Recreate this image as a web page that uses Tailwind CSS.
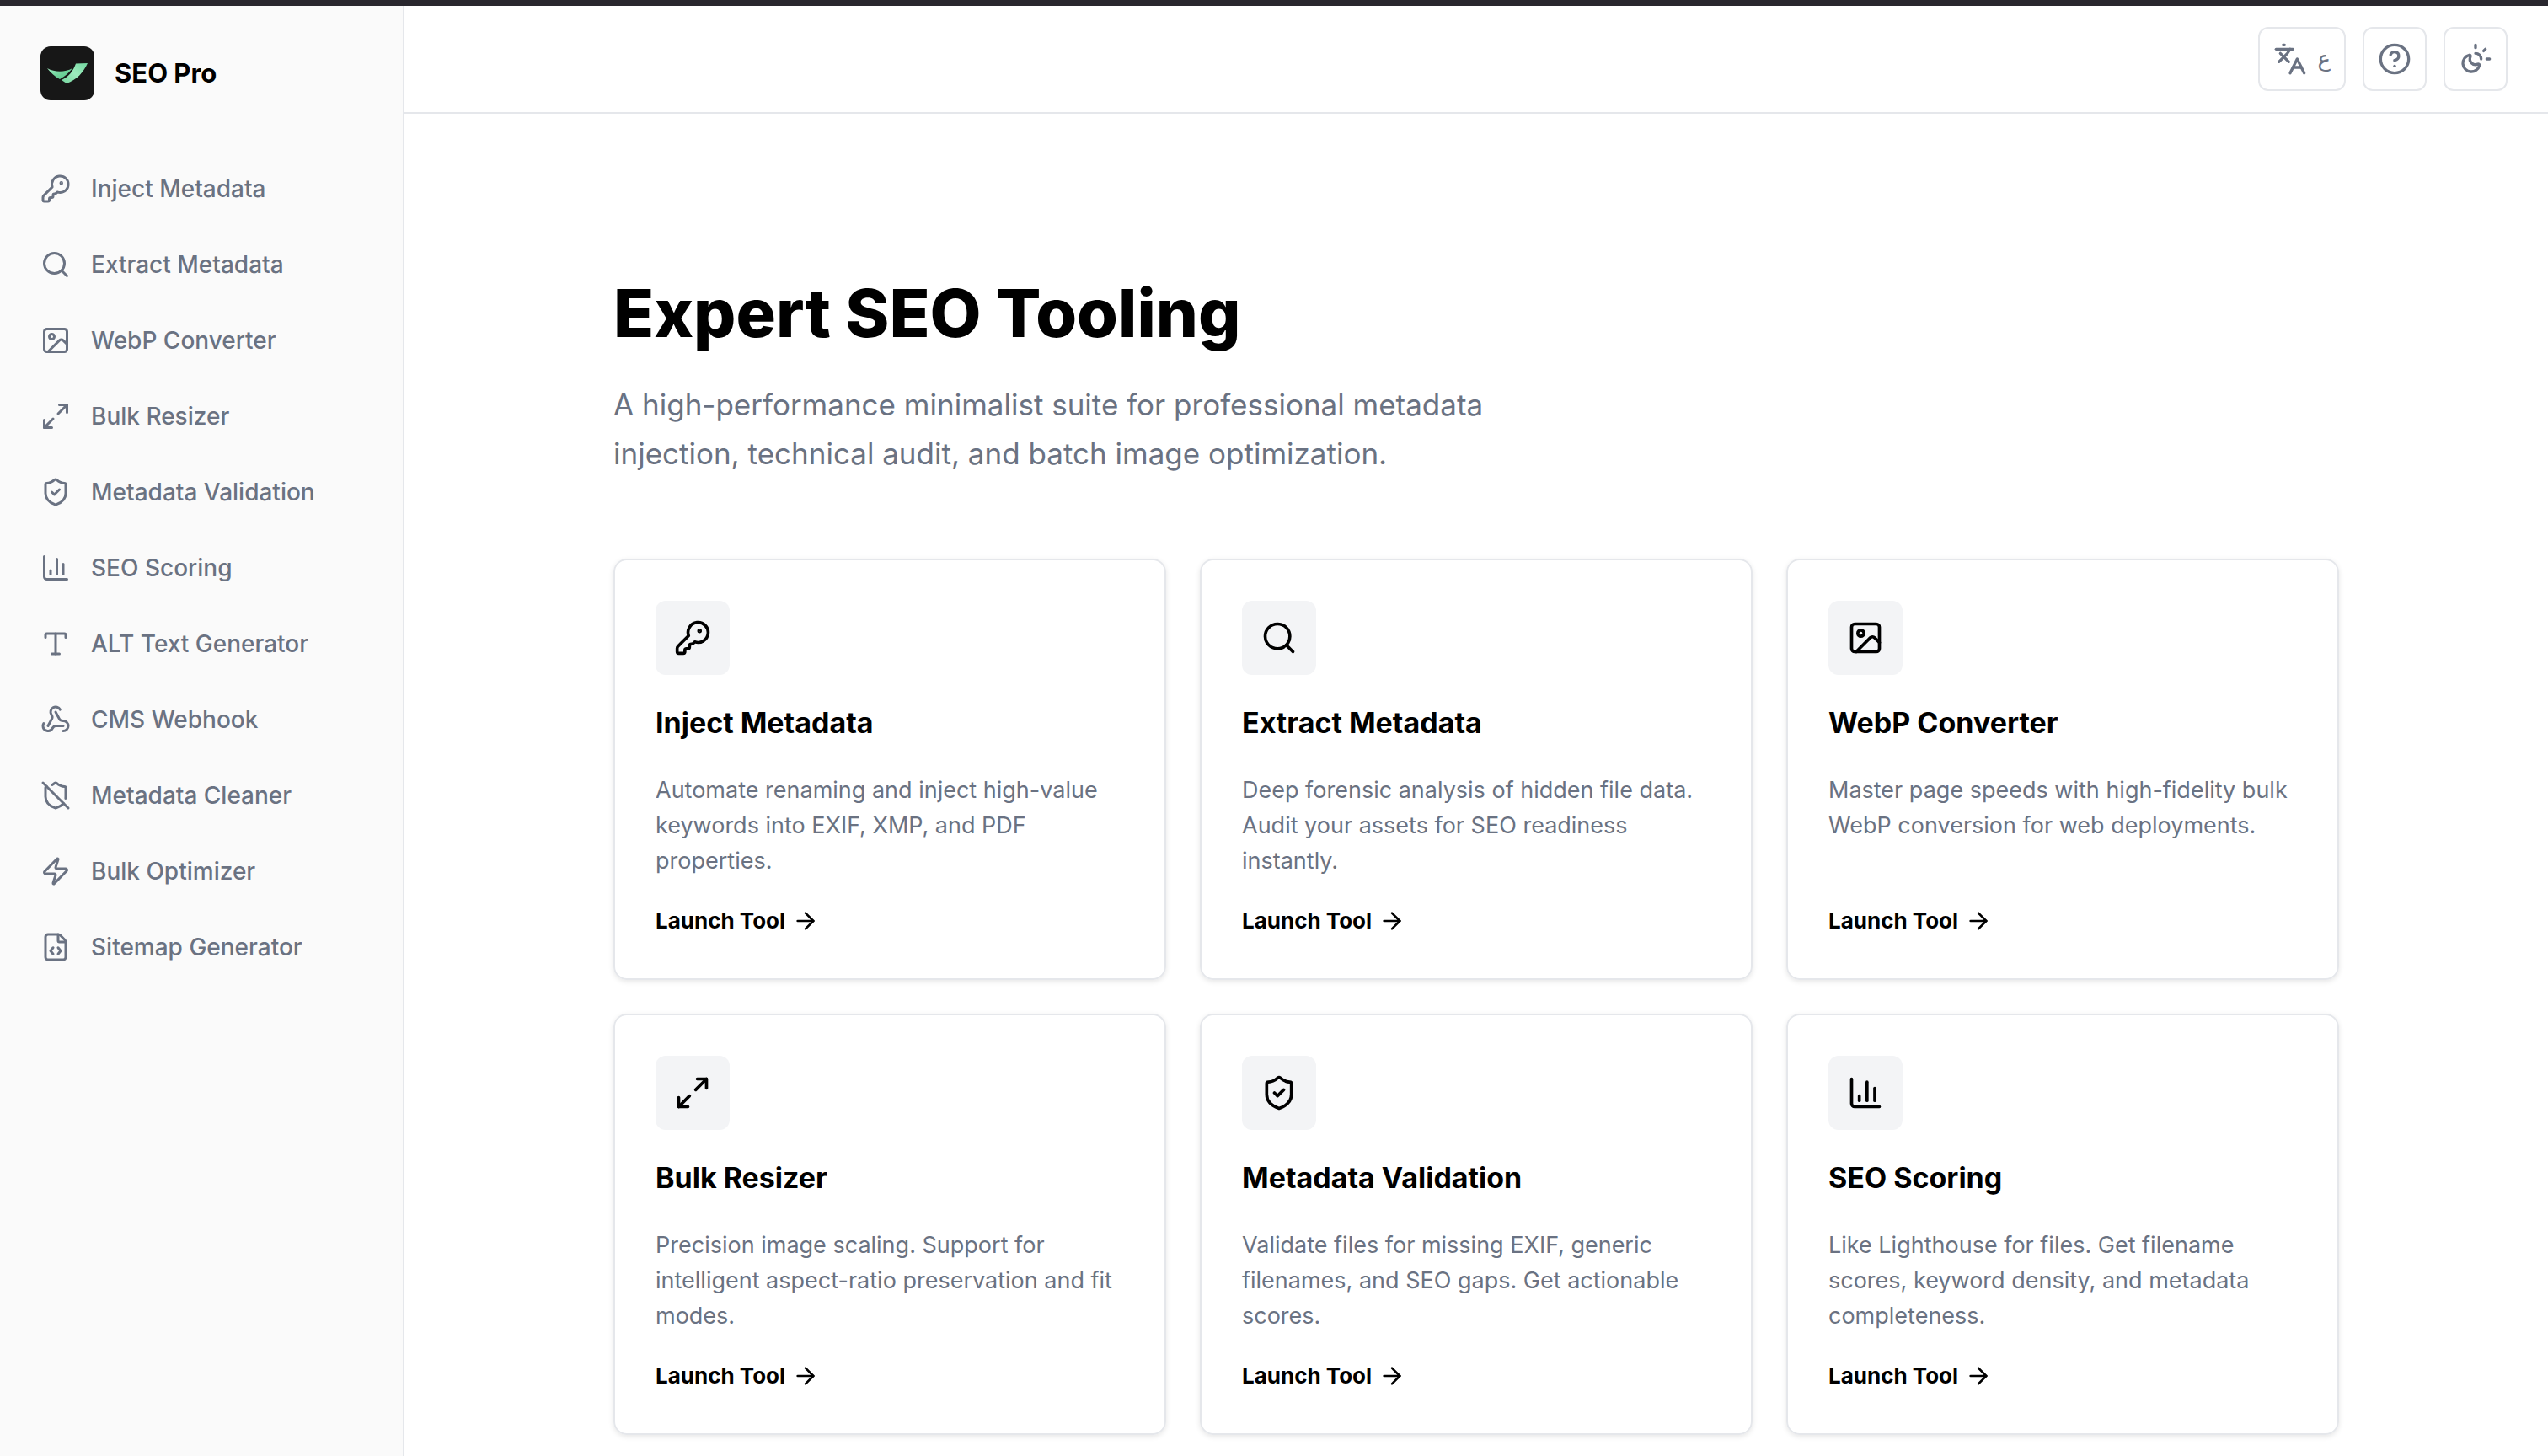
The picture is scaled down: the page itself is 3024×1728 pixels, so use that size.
<!DOCTYPE html>
<html lang="en">
<head>
  <meta charset="UTF-8">
  <meta name="viewport" content="width=device-width, initial-scale=1.0">
  <title>SEO Pro</title>
  <script src="https://cdn.jsdelivr.net/npm/@tailwindcss/browser@4"></script>
</head>
<body class="min-h-screen flex flex-col bg-white text-black font-['Inter','Liberation_Sans',sans-serif]">
  <!-- Icon sprite -->
  <svg class="hidden" aria-hidden="true">
    <symbol id="i-key" viewBox="0 0 24 24"><path d="M2.586 17.414A2 2 0 0 0 2 18.828V21a1 1 0 0 0 1 1h3a1 1 0 0 0 1-1v-1a1 1 0 0 1 1-1h1a1 1 0 0 0 1-1v-1a1 1 0 0 1 1-1h.172a2 2 0 0 0 1.414-.586l.814-.814a6.5 6.5 0 1 0-4-4z"/><circle cx="16.5" cy="7.5" r=".5" fill="currentColor"/></symbol>
    <symbol id="i-search" viewBox="0 0 24 24"><circle cx="11" cy="11" r="8"/><path d="m21 21-4.3-4.3"/></symbol>
    <symbol id="i-image" viewBox="0 0 24 24"><rect x="3" y="3" width="18" height="18" rx="2"/><circle cx="9" cy="9" r="2"/><path d="m21 15-3.086-3.086a2 2 0 0 0-2.828 0L6 21"/></symbol>
    <symbol id="i-resize" viewBox="0 0 24 24"><path d="M15 3h6v6"/><path d="m21 3-7 7"/><path d="m3 21 7-7"/><path d="M9 21H3v-6"/></symbol>
    <symbol id="i-shield" viewBox="0 0 24 24"><path d="M20 13c0 5-3.5 7.5-7.66 8.95a1 1 0 0 1-.67-.01C7.5 20.5 4 18 4 13V6a1 1 0 0 1 1-1c2 0 4.5-1.2 6.24-2.72a1.17 1.17 0 0 1 1.52 0C14.51 3.81 17 5 19 5a1 1 0 0 1 1 1z"/><path d="m9 12 2 2 4-4"/></symbol>
    <symbol id="i-chart" viewBox="0 0 24 24"><path d="M3 3v16a2 2 0 0 0 2 2h16"/><path d="M18 17V9"/><path d="M13 17V5"/><path d="M8 17v-3"/></symbol>
    <symbol id="i-type" viewBox="0 0 24 24"><path d="M12 4v16"/><path d="M4 7V5a1 1 0 0 1 1-1h14a1 1 0 0 1 1 1v2"/><path d="M9 20h6"/></symbol>
    <symbol id="i-webhook" viewBox="0 0 24 24"><path d="M18 16.98h-5.99c-1.1 0-1.95.94-2.48 1.9A4 4 0 0 1 2 17c.01-.7.2-1.4.57-2"/><path d="m6 17 3.13-5.78c.53-.97.1-2.18-.5-3.1a4 4 0 1 1 6.89-4.06"/><path d="m12 6 3.13 5.73C15.66 12.7 16.9 13 18 13a4 4 0 0 1 0 8"/></symbol>
    <symbol id="i-shield-off" viewBox="0 0 24 24"><path d="m2 2 20 20"/><path d="M5 5a1 1 0 0 0-1 1v7c0 5 3.5 7.5 7.67 8.94a1 1 0 0 0 .67.01c2.35-.82 4.48-1.97 5.9-3.71"/><path d="M9.309 3.652A12.252 12.252 0 0 0 11.24 2.28a1.17 1.17 0 0 1 1.52 0C14.51 3.81 17 5 19 5a1 1 0 0 1 1 1v7a9.784 9.784 0 0 1-.08 1.264"/></symbol>
    <symbol id="i-zap" viewBox="0 0 24 24"><path d="M4 14a1 1 0 0 1-.78-1.63l9.9-10.2a.5.5 0 0 1 .86.46l-1.92 6.02A1 1 0 0 0 13 10h7a1 1 0 0 1 .78 1.63l-9.9 10.2a.5.5 0 0 1-.86-.46l1.92-6.02A1 1 0 0 0 11 14z"/></symbol>
    <symbol id="i-file-code" viewBox="0 0 24 24"><path d="M6 22a2 2 0 0 1-2-2V4a2 2 0 0 1 2-2h8a2.4 2.4 0 0 1 1.704.706l3.588 3.588A2.4 2.4 0 0 1 20 8v12a2 2 0 0 1-2 2z"/><path d="M14 2v5a1 1 0 0 0 1 1h5"/><path d="M10 12.5 8 15l2 2.5"/><path d="m14 12.5 2 2.5-2 2.5"/></symbol>
    <symbol id="i-languages" viewBox="0 0 24 24"><path d="m5 8 6 6"/><path d="m4 14 6-6 2-3"/><path d="M2 5h12"/><path d="M7 2h1"/><path d="m22 22-5-10-5 10"/><path d="M14 18h6"/></symbol>
    <symbol id="i-help" viewBox="0 0 24 24"><circle cx="12" cy="12" r="10"/><path d="M9.09 9a3 3 0 0 1 5.83 1c0 2-3 3-3 3"/><path d="M12 17h.01"/></symbol>
    <symbol id="i-sun-moon" viewBox="0 0 24 24"><path d="M12 2v2"/><path d="M14.837 16.385a6 6 0 1 1-7.223-7.222c.624-.147.97.66.715 1.248a4 4 0 0 0 5.26 5.259c.589-.255 1.396.09 1.248.715"/><path d="M16 12a4 4 0 0 0-4-4"/><path d="m19 5-1.256 1.256"/><path d="M20 12h2"/></symbol>
    <symbol id="i-arrow" viewBox="0 0 24 24"><path d="M5 12h14"/><path d="m12 5 7 7-7 7"/></symbol>
  </svg>

  <div class="h-[7px] shrink-0 bg-[#29272e]"></div>

  <div class="flex flex-1">
    <!-- Sidebar -->
    <aside class="w-[480px] shrink-0 border-r-2 border-gray-200 bg-[#fafafa] p-12">
      <a href="#" class="flex items-center gap-6">
        <svg class="size-16" viewBox="0 0 64 64" aria-hidden="true">
          <defs>
            <linearGradient id="wing-left" x1="0" y1="0" x2="1" y2="1"><stop offset="0" stop-color="#a5efc4"/><stop offset=".5" stop-color="#6fd39b"/><stop offset="1" stop-color="#5cc48a"/></linearGradient>
            <linearGradient id="wing-right" x1="1" y1="0" x2="0" y2="1"><stop offset="0" stop-color="#71d69f"/><stop offset=".5" stop-color="#9debbd"/><stop offset="1" stop-color="#74d49e"/></linearGradient>
          </defs>
          <rect width="64" height="64" rx="12" fill="#171717"/>
          <path d="M8 26C17 31 29 31 38 26C34 31 30 35 23 39C17 36 12 31 8 26Z" fill="url(#wing-left)"/>
          <path d="M42 20.500L56 20C51 31 43 40 31 44L25 40C34 36 39 29 42 20.500Z" fill="url(#wing-right)"/>
        </svg>
        <span class="text-[31px] leading-[42px] font-bold">SEO Pro</span>
      </a>

      <nav class="mt-16 flex flex-col gap-2 text-[28px] leading-[42px] font-medium text-gray-500">
        <a href="#" class="flex items-center gap-6 py-5"><svg class="size-9 fill-none stroke-current stroke-2 [stroke-linecap:round] [stroke-linejoin:round]"><use href="#i-key"/></svg>Inject Metadata</a>
        <a href="#" class="flex items-center gap-6 py-5"><svg class="size-9 fill-none stroke-current stroke-2 [stroke-linecap:round] [stroke-linejoin:round]"><use href="#i-search"/></svg>Extract Metadata</a>
        <a href="#" class="flex items-center gap-6 py-5"><svg class="size-9 fill-none stroke-current stroke-2 [stroke-linecap:round] [stroke-linejoin:round]"><use href="#i-image"/></svg>WebP Converter</a>
        <a href="#" class="flex items-center gap-6 py-5"><svg class="size-9 fill-none stroke-current stroke-2 [stroke-linecap:round] [stroke-linejoin:round]"><use href="#i-resize"/></svg>Bulk Resizer</a>
        <a href="#" class="flex items-center gap-6 py-5"><svg class="size-9 fill-none stroke-current stroke-2 [stroke-linecap:round] [stroke-linejoin:round]"><use href="#i-shield"/></svg>Metadata Validation</a>
        <a href="#" class="flex items-center gap-6 py-5"><svg class="size-9 fill-none stroke-current stroke-2 [stroke-linecap:round] [stroke-linejoin:round]"><use href="#i-chart"/></svg>SEO Scoring</a>
        <a href="#" class="flex items-center gap-6 py-5"><svg class="size-9 fill-none stroke-current stroke-2 [stroke-linecap:round] [stroke-linejoin:round]"><use href="#i-type"/></svg>ALT Text Generator</a>
        <a href="#" class="flex items-center gap-6 py-5"><svg class="size-9 fill-none stroke-current stroke-2 [stroke-linecap:round] [stroke-linejoin:round]"><use href="#i-webhook"/></svg>CMS Webhook</a>
        <a href="#" class="flex items-center gap-6 py-5"><svg class="size-9 fill-none stroke-current stroke-2 [stroke-linecap:round] [stroke-linejoin:round]"><use href="#i-shield-off"/></svg>Metadata Cleaner</a>
        <a href="#" class="flex items-center gap-6 py-5"><svg class="size-9 fill-none stroke-current stroke-2 [stroke-linecap:round] [stroke-linejoin:round]"><use href="#i-zap"/></svg>Bulk Optimizer</a>
        <a href="#" class="flex items-center gap-6 py-5"><svg class="size-9 fill-none stroke-current stroke-2 [stroke-linecap:round] [stroke-linejoin:round]"><use href="#i-file-code"/></svg>Sitemap Generator</a>
      </nav>
    </aside>

    <div class="flex-1">
      <!-- Top bar -->
      <header class="flex h-32 items-center justify-end gap-5 border-b-2 border-gray-200 px-12 text-gray-500">
        <button type="button" aria-label="Switch language" class="flex h-19 items-center gap-3 rounded-xl border-2 border-gray-200 px-4">
          <svg class="size-10 fill-none stroke-current stroke-2 [stroke-linecap:round] [stroke-linejoin:round]"><use href="#i-languages"/></svg>
          <span lang="ar" class="font-['DejaVu_Sans',sans-serif] text-[26px] leading-8">ع</span>
        </button>
        <button type="button" aria-label="Help" class="flex size-19 items-center justify-center rounded-xl border-2 border-gray-200">
          <svg class="size-10 fill-none stroke-current stroke-2 [stroke-linecap:round] [stroke-linejoin:round]"><use href="#i-help"/></svg>
        </button>
        <button type="button" aria-label="Toggle theme" class="flex size-19 items-center justify-center rounded-xl border-2 border-gray-200">
          <svg class="size-10 fill-none stroke-current stroke-2 [stroke-linecap:round] [stroke-linejoin:round]"><use href="#i-sun-moon"/></svg>
        </button>
      </header>

      <main class="mx-auto max-w-[2048px] pt-48 pb-6">
        <h1 class="text-[79px] leading-[88px] font-extrabold">Expert SEO Tooling</h1>
        <p class="mt-9 max-w-[1150px] text-[35px] leading-[58px] text-gray-500">A high-performance minimalist suite for professional metadata injection, technical audit, and batch image optimization.</p>

        <!-- Tool cards -->
        <section class="mt-24 grid grid-cols-3 gap-10">
          <article class="flex flex-col rounded-2xl border-2 border-gray-200 p-12 shadow-[0_2px_6px_rgba(0,0,0,0.1)]">
            <div class="flex size-22 items-center justify-center rounded-xl bg-gray-100"><svg class="size-11 fill-none stroke-current stroke-2 [stroke-linecap:round] [stroke-linejoin:round]"><use href="#i-key"/></svg></div>
            <h2 class="mt-8 text-[34px] leading-[50px] font-bold">Inject Metadata</h2>
            <p class="mt-[34px] grow text-[27px] leading-[42px] text-gray-500">Automate renaming and inject high-value keywords into EXIF, XMP, and PDF properties.</p>
            <a href="#" class="mt-[30px] flex items-center gap-2 text-[26px] leading-10 font-bold">Launch Tool<svg class="size-8 fill-none stroke-current stroke-2 [stroke-linecap:round] [stroke-linejoin:round]"><use href="#i-arrow"/></svg></a>
          </article>
          <article class="flex flex-col rounded-2xl border-2 border-gray-200 p-12 shadow-[0_2px_6px_rgba(0,0,0,0.1)]">
            <div class="flex size-22 items-center justify-center rounded-xl bg-gray-100"><svg class="size-11 fill-none stroke-current stroke-2 [stroke-linecap:round] [stroke-linejoin:round]"><use href="#i-search"/></svg></div>
            <h2 class="mt-8 text-[34px] leading-[50px] font-bold">Extract Metadata</h2>
            <p class="mt-[34px] grow text-[27px] leading-[42px] text-gray-500">Deep forensic analysis of hidden file data. Audit your assets for SEO readiness instantly.</p>
            <a href="#" class="mt-[30px] flex items-center gap-2 text-[26px] leading-10 font-bold">Launch Tool<svg class="size-8 fill-none stroke-current stroke-2 [stroke-linecap:round] [stroke-linejoin:round]"><use href="#i-arrow"/></svg></a>
          </article>
          <article class="flex flex-col rounded-2xl border-2 border-gray-200 p-12 shadow-[0_2px_6px_rgba(0,0,0,0.1)]">
            <div class="flex size-22 items-center justify-center rounded-xl bg-gray-100"><svg class="size-11 fill-none stroke-current stroke-2 [stroke-linecap:round] [stroke-linejoin:round]"><use href="#i-image"/></svg></div>
            <h2 class="mt-8 text-[34px] leading-[50px] font-bold">WebP Converter</h2>
            <p class="mt-[34px] grow text-[27px] leading-[42px] text-gray-500">Master page speeds with high-fidelity bulk WebP conversion for web deployments.</p>
            <a href="#" class="mt-[30px] flex items-center gap-2 text-[26px] leading-10 font-bold">Launch Tool<svg class="size-8 fill-none stroke-current stroke-2 [stroke-linecap:round] [stroke-linejoin:round]"><use href="#i-arrow"/></svg></a>
          </article>
          <article class="flex flex-col rounded-2xl border-2 border-gray-200 p-12 shadow-[0_2px_6px_rgba(0,0,0,0.1)]">
            <div class="flex size-22 items-center justify-center rounded-xl bg-gray-100"><svg class="size-11 fill-none stroke-current stroke-2 [stroke-linecap:round] [stroke-linejoin:round]"><use href="#i-resize"/></svg></div>
            <h2 class="mt-8 text-[34px] leading-[50px] font-bold">Bulk Resizer</h2>
            <p class="mt-[34px] grow text-[27px] leading-[42px] text-gray-500">Precision image scaling. Support for intelligent aspect-ratio preservation and fit modes.</p>
            <a href="#" class="mt-[30px] flex items-center gap-2 text-[26px] leading-10 font-bold">Launch Tool<svg class="size-8 fill-none stroke-current stroke-2 [stroke-linecap:round] [stroke-linejoin:round]"><use href="#i-arrow"/></svg></a>
          </article>
          <article class="flex flex-col rounded-2xl border-2 border-gray-200 p-12 shadow-[0_2px_6px_rgba(0,0,0,0.1)]">
            <div class="flex size-22 items-center justify-center rounded-xl bg-gray-100"><svg class="size-11 fill-none stroke-current stroke-2 [stroke-linecap:round] [stroke-linejoin:round]"><use href="#i-shield"/></svg></div>
            <h2 class="mt-8 text-[34px] leading-[50px] font-bold">Metadata Validation</h2>
            <p class="mt-[34px] grow text-[27px] leading-[42px] text-gray-500">Validate files for missing EXIF, generic filenames, and SEO gaps. Get actionable scores.</p>
            <a href="#" class="mt-[30px] flex items-center gap-2 text-[26px] leading-10 font-bold">Launch Tool<svg class="size-8 fill-none stroke-current stroke-2 [stroke-linecap:round] [stroke-linejoin:round]"><use href="#i-arrow"/></svg></a>
          </article>
          <article class="flex flex-col rounded-2xl border-2 border-gray-200 p-12 shadow-[0_2px_6px_rgba(0,0,0,0.1)]">
            <div class="flex size-22 items-center justify-center rounded-xl bg-gray-100"><svg class="size-11 fill-none stroke-current stroke-2 [stroke-linecap:round] [stroke-linejoin:round]"><use href="#i-chart"/></svg></div>
            <h2 class="mt-8 text-[34px] leading-[50px] font-bold">SEO Scoring</h2>
            <p class="mt-[34px] grow text-[27px] leading-[42px] text-gray-500">Like Lighthouse for files. Get filename scores, keyword density, and metadata completeness.</p>
            <a href="#" class="mt-[30px] flex items-center gap-2 text-[26px] leading-10 font-bold">Launch Tool<svg class="size-8 fill-none stroke-current stroke-2 [stroke-linecap:round] [stroke-linejoin:round]"><use href="#i-arrow"/></svg></a>
          </article>
        </section>
      </main>
    </div>
  </div>
</body>
</html>
